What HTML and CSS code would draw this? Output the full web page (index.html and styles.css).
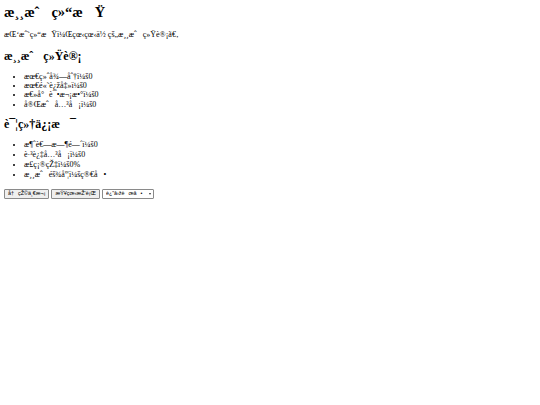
FILE: index.html
```html
<!DOCTYPE html>
<html>
<head>
<meta charset="windows-1252">
<title>游戏结束</title>
<link rel="stylesheet" href="styles.css">
</head>
<body>
<div class="page">
  <h1 class="title">游戏结束</h1>
  <p class="intro">挑战结束，看看你的游戏统计。</p>
  <h2 class="section">游戏统计</h2>
  <ul class="stats">
    <li>最终得分：0</li>
    <li>最高连击：0</li>
    <li>总尝试次数：0</li>
    <li>完成关卡：0</li>
  </ul>
  <h2 class="section">详细信息</h2>
  <ul class="stats stats-last">
    <li>消耗时间：0</li>
    <li>跳过关卡：0</li>
    <li>正确率：0%</li>
    <li>游戏难度：简单</li>
  </ul>
  <div class="actions">
    <button class="btn">再玩一次</button>
    <button class="btn">查看排行</button>
    <span class="menu-wrap"><select class="menu"><option>返回菜单</option></select></span>
  </div>
</div>
</body>
</html>
```
FILE: styles.css
```css
html, body {
  margin: 0;
  padding: 0;
  background: #ffffff;
}
.page {
  padding: 3px 4px 4px;
  font-family: "Liberation Serif", "Times New Roman", serif;
  color: #000000;
}
.title {
  font-size: 14.5px;
  font-weight: bold;
  margin: 0;
}
.intro {
  font-size: 8px;
  margin: 7px 0 8px;
}
.section {
  font-size: 12px;
  font-weight: bold;
  margin: 0 0 8px;
}
.stats {
  font-size: 8px;
  margin: 0 0 6px;
  padding-left: 20px;
}
.stats-last {
  margin-bottom: 9px;
}
.actions {
  display: flex;
  gap: 2px;
  align-items: center;
  margin-top: 0;
}
.btn {
  font-family: "Liberation Sans", Arial, sans-serif;
  font-size: 5.4px;
  height: 10px;
  padding: 0 3px;
  margin: 0;
  background: #efefef;
  border: 1px solid #8a8a8a;
  border-radius: 1px;
  color: #000000;
  line-height: 1;
}
.menu-wrap {
  position: relative;
  display: inline-flex;
}
.menu {
  appearance: none;
  -webkit-appearance: none;
  font-family: "Liberation Sans", Arial, sans-serif;
  font-size: 5.4px;
  height: 10px;
  margin: 0;
  padding: 0 10px 0 3px;
  background: #ffffff;
  border: 1px solid #8a8a8a;
  border-radius: 1px;
  color: #000000;
  line-height: 1;
}
.menu-wrap::after {
  content: "";
  position: absolute;
  right: 3px;
  top: 4px;
  border-left: 1.5px solid transparent;
  border-right: 1.5px solid transparent;
  border-top: 2px solid #333333;
  pointer-events: none;
}
```
